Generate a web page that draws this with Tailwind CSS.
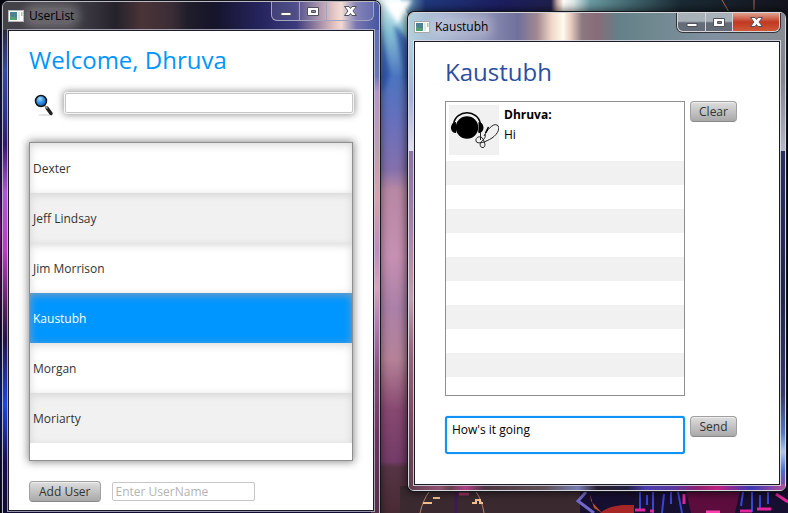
<!DOCTYPE html>
<html lang="en">
<head>
<meta charset="utf-8">
<title>UserList</title>
<script src="https://cdn.jsdelivr.net/npm/@tailwindcss/browser@4"></script>
</head>
<body class="relative h-screen overflow-hidden bg-[#07071c] font-['Open_Sans','Noto_Sans',sans-serif] text-xs text-[#333]">

<!-- Wallpaper -->
<svg class="absolute inset-0 h-full w-full" viewBox="0 0 788 513" preserveAspectRatio="none" aria-hidden="true">
  <defs>
    <linearGradient id="gap" x1="0" y1="0" x2="0" y2="1">
      <stop offset="0" stop-color="#e4fafc"/><stop offset=".06" stop-color="#8ac4d6"/><stop offset=".15" stop-color="#4c74c0"/><stop offset=".24" stop-color="#6870bc"/><stop offset=".33" stop-color="#8470ac"/><stop offset=".37" stop-color="#b888a4"/><stop offset=".5" stop-color="#c690b2"/><stop offset=".6" stop-color="#ac80a8"/><stop offset=".7" stop-color="#b58298"/><stop offset=".8" stop-color="#874870"/><stop offset=".9" stop-color="#733c68"/><stop offset=".91" stop-color="#573444"/><stop offset="1" stop-color="#482a34"/>
    </linearGradient>
    <linearGradient id="leftEdge" x1="0" y1="0" x2="0" y2="1">
      <stop offset="0" stop-color="#05050d"/><stop offset=".2" stop-color="#10134a"/><stop offset=".35" stop-color="#260d56"/><stop offset=".45" stop-color="#8a1594"/><stop offset=".55" stop-color="#4c0b50"/><stop offset=".65" stop-color="#0c0526"/><stop offset=".78" stop-color="#082290"/><stop offset=".88" stop-color="#0a0a38"/><stop offset="1" stop-color="#060616"/>
    </linearGradient>
    <linearGradient id="topStrip" x1="0" y1="0" x2="1" y2="0">
      <stop offset="0" stop-color="#d9f4f8"/><stop offset=".06" stop-color="#8ac0d0"/><stop offset=".12" stop-color="#20387c"/><stop offset=".3" stop-color="#1c1e60"/><stop offset=".425" stop-color="#20204c"/><stop offset=".44" stop-color="#c8a8a0"/><stop offset=".455" stop-color="#fffdf6"/><stop offset=".48" stop-color="#dce8e8"/><stop offset=".52" stop-color="#6b9aa2"/><stop offset=".62" stop-color="#42656e"/><stop offset=".74" stop-color="#1a2a34"/><stop offset="1" stop-color="#14141e"/>
    </linearGradient>
    <filter id="soft"><feGaussianBlur stdDeviation="2"/></filter>
    <filter id="fine"><feGaussianBlur stdDeviation=".6"/></filter>
  </defs>
  <rect width="788" height="513" fill="#07071c"/>
  <rect width="10" height="513" fill="url(#leftEdge)"/>
  <rect x="376" width="412" height="60" fill="url(#topStrip)"/>
  <path d="M376 0h24l16 30v483h-40z" fill="url(#gap)"/>
  <g filter="url(#soft)">
    <path d="M382 0h30l-14 24z" fill="#fff"/>
    <path d="M380 24l10 50-8 20zM394 24l16 18v60z" fill="#2448a4" opacity=".7"/>
  </g>
  <path d="M722 0l7 12M754 0v10" stroke="#b06850" fill="none"/>
  <rect x="400" y="486" width="180" height="27" fill="#3a2a30"/>
  <rect x="580" y="486" width="208" height="27" fill="#170f30"/>
  <g filter="url(#fine)">
    <path d="M429 492q-6 8-9 21M476 492q6 8 8 21" stroke="#b8846a" fill="none"/>
    <path d="M423 503h9M433 498h7M472 503h4v-3h4v3h3" stroke="#f0c090" stroke-width="2" fill="none"/>
    <path d="M456 491v22" stroke="#3c1a54" stroke-width="3"/><path d="M459 494h10" stroke="#a03060" stroke-width="3"/>
    <path d="M586 492l-8 9 16 12" stroke="#7068c8" stroke-width="3" fill="none"/>
    <path d="M590 494l4 14 8 5-11-12z" fill="#c05030"/>
    <path d="M600 513c10-8 20-8 34-8v8z" fill="#a82828"/>
    <path d="M686 491h54l-5 22h-44z" fill="#5c0b3c"/><path d="M706 512h14" stroke="#ff40b0" stroke-width="3"/>
    <path d="M640 492v18M647 495v10M653 492v21M664 494l-2 19M671 492v12M678 492l4 21M743 492l-2 14M752 492v20M760 495v14M768 492v12" stroke="#3a44d0" stroke-width="2"/>
    <path d="M635 510h10M650 511h4M684 494v10M740 511h12M757 509h14M776 494l12 8" stroke="#e0269c" stroke-width="3"/>
  </g>
</svg>

<main class="relative flex items-start gap-7 pl-0.5 pr-0.5">

  <!-- User list window -->
  <section aria-label="UserList" class="relative mt-px min-w-0 flex-1 overflow-hidden rounded-t-md border border-[#b9b9c4] bg-[linear-gradient(180deg,#34323a_0%,#2a2838_5%,#3548a8_13%,#2c2f90_22%,#35186c_27%,#b055e0_36%,#c23ac0_47%,#54205c_58%,#251248_64%,#1c44e8_76%,#180d50_87%,#0d0a28_100%)] px-[5px] pb-5 shadow-[0_0_0_1px_#15151c,0_0_8px_1px_rgba(0,0,0,0.5)]">
    <div class="absolute top-0 right-0 bottom-0 w-2 bg-[linear-gradient(180deg,#5a66b0_0%,#6878b8_14%,#b398c8_17%,#c49fb2_30%,#d9a4a8_37%,#bd8cc2_47%,#d9a4bb_54%,#b880b8_60%,#86507f_70%,#6c3264_82%,#4c3040_100%)]"></div>
    <div class="absolute inset-x-0 top-0 h-7 bg-[linear-gradient(90deg,#45434a_0%,#3f3d44_20%,#25222c_30%,#4a3438_37%,#3a2c35_45%,#201e2a_49%,#15142a_56%,#25235c_68%,#3c3a7c_78%,#e2c0c0_88%,#f0d8d0_90%,#7775b0_94%,#4656a0_100%)]"></div>
    <header class="relative flex h-7 items-start">
      <div class="flex h-[27px] flex-1 items-center gap-1">
        <svg class="h-3 w-4 shrink-0" viewBox="0 0 16 12" aria-hidden="true"><rect x=".5" y=".5" width="15" height="11" fill="#fff" stroke="#b6b6b6"/><path d="M2 2h7v8H2z" fill="#4c8292"/><path d="M2 6l7 2v2H2z" fill="#54a070"/><path d="M10 2h2v8h-2z" fill="#e4e4e4"/><path d="M13 2h1.500v4H13z" fill="#9cc4ac"/></svg>
        <h1 class="rounded-full bg-white/20 px-px text-xs leading-4 text-black shadow-[0_0_8px_5px_rgba(255,255,255,0.2)]">UserList</h1>
      </div>
      <div class="flex h-[19px] divide-x divide-[#a5a4be] rounded-b-md border border-t-0 border-[#a5a4be] bg-white/10">
        <button aria-label="Minimize" class="flex w-[28px] items-center justify-center"><svg class="h-4 w-4" viewBox="0 0 16 16"><path d="M3 9.500h10v3H3z" fill="#fff" stroke="#50505e"/></svg></button>
        <button aria-label="Maximize" class="flex w-[27px] items-center justify-center"><svg class="h-4 w-4" viewBox="0 0 16 16"><path d="M2.500 4.500h11v8h-11zM6.500 7.500v2h4v-2z" fill="#fff" fill-rule="evenodd" stroke="#50505e"/></svg></button>
        <button aria-label="Close" class="flex w-[46px] items-center justify-center"><svg class="h-4 w-4" viewBox="0 0 16 16"><path d="M2.500 3.500H7l1.500 2 1.500-2h4.500l-3.500 4.500 3.500 4.500H10l-1.500-2-1.500 2H2.500L6 8z" fill="#fff" stroke="#50505e"/></svg></button>
      </div>
    </header>
    <div class="relative border border-[#1c1c28] bg-white px-5 pt-[11px] pb-2 shadow-[0_0_0_1px_rgba(205,205,220,0.7)]">
      <h2 class="text-2xl leading-9 text-[#0096ff]">Welcome, Dhruva</h2>
      <div class="mt-[13px] flex items-center gap-2.5">
        <svg class="ml-1 h-6 w-[22px] shrink-0 translate-y-0.5" viewBox="0 0 22 24" aria-hidden="true">
          <defs><radialGradient id="lens" cx=".4" cy=".3" r=".7"><stop offset="0" stop-color="#a8dcfb"/><stop offset=".5" stop-color="#3293e6"/><stop offset="1" stop-color="#0a58b4"/></radialGradient></defs>
          <ellipse cx="12" cy="22" rx="7" ry="1" fill="#e4e4e4"/>
          <path d="M14 15l4 5.500" stroke="#222" stroke-width="3.500" stroke-linecap="round"/><path d="M11.500 12.500l3 3" stroke="#999" stroke-width="1.500"/>
          <circle cx="8" cy="8" r="5.500" fill="url(#lens)" stroke="#151515" stroke-width="1.500"/>
        </svg>
        <input type="text" aria-label="Search users" class="h-5 min-w-0 flex-1 rounded-xs border border-[#c6c6c6] bg-white px-1 shadow-[0_0_0_1px_#f4f4f4,0_0_7px_2px_rgba(0,0,0,0.4)] outline-none">
      </div>
      <ul class="mt-[27px] h-[319px] border border-[#8f8f8f] bg-white shadow-[0_0_8px_1px_rgba(0,0,0,0.45)]">
        <li class="flex h-[50px] items-center px-[3px] pt-0.5 shadow-[inset_0_2px_8px_rgba(0,0,0,0.16)]">Dexter</li>
        <li class="flex h-[50px] items-center bg-[#f1f1f1] px-[3px] pt-0.5 shadow-[inset_0_2px_8px_rgba(0,0,0,0.12)]">Jeff Lindsay</li>
        <li class="flex h-[50px] items-center px-[3px] pt-0.5 shadow-[inset_0_2px_8px_rgba(0,0,0,0.16)]">Jim Morrison</li>
        <li class="flex h-[50px] items-center bg-[#0096ff] px-[3px] pt-0.5 text-white shadow-[inset_0_2px_8px_rgba(140,160,180,0.9)]" aria-current="true">Kaustubh</li>
        <li class="flex h-[50px] items-center px-[3px] pt-0.5 shadow-[inset_0_2px_8px_rgba(0,0,0,0.16)]">Morgan</li>
        <li class="flex h-[50px] items-center bg-[#f1f1f1] px-[3px] pt-0.5 shadow-[inset_0_2px_8px_rgba(0,0,0,0.12)]">Moriarty</li>
      </ul>
      <form class="mt-5 flex items-center gap-[11px]">
        <button type="button" class="h-[21px] rounded border border-[#a0a0a0] border-b-[#888] bg-linear-to-b from-[#dedede] to-[#a9a9a9] px-[9px] leading-4 shadow-[inset_0_1px_0_#eee]">Add User</button>
        <input type="text" aria-label="Enter UserName" placeholder="Enter UserName" class="h-[19px] w-[143px] rounded-xs border border-[#c6c6c6] bg-white px-[3px] outline-none placeholder:text-[#b4b4b4]">
      </form>
    </div>
  </section>

  <!-- Chat window -->
  <section aria-label="Kaustubh" class="relative mt-3 min-w-0 flex-1 overflow-hidden rounded-md border border-[#d5d5dc] bg-[#5f3a48] px-[5px] pb-[5px] shadow-[0_0_0_1px_#15151c,0_0_9px_2px_rgba(0,0,0,0.6)]">
    <div class="absolute top-0 bottom-0 left-0 w-2 bg-[linear-gradient(180deg,#b8d8e4_0%,#a8c4dc_12%,#a4b0dc_18%,#e4e0f0_28.900%,#8874a4_29%,#9c7cac_40%,#b890a8_54%,#c0a0b0_60%,#9c6880_70%,#7c4860_85%,#60404c_100%)]"></div>
    <div class="absolute top-0 right-0 bottom-0 w-2 bg-[linear-gradient(180deg,#8a8c94_0%,#80868e_14%,#b4b8c8_28.900%,#283060_29%,#20284c_60%,#343c68_80%,#5878c0_88%,#b0c8ec_92%,#4c6cd0_96%,#8c3c9c_100%)]"></div>
    <div class="absolute inset-x-0 bottom-0 h-1.5 bg-[linear-gradient(90deg,#60404c_0%,#905070_8%,#64404c_11%,#b04088_15%,#4c3440_20%,#5c5054_36%,#787cb0_45%,#282030_50%,#202040_58%,#4c3cac_63%,#5838a0_70%,#902070_77%,#c02080_82%,#3c38b0_91%,#b050a0_100%)]"></div>
    <div class="absolute inset-x-0 top-0 h-7 bg-[linear-gradient(90deg,#b4d0dc_0%,#a4b4d0_8%,#8c90b4_20%,#70709c_29%,#a08890_34%,#f0d8c8_38%,#fffaf0_41%,#e8ccc0_43%,#8c7880_46%,#886c78_50%,#648088_56%,#708890_65%,#8090a0_80%,#888c94_100%)]"></div>
    <header class="relative flex h-7 items-start">
      <div class="flex h-[27px] flex-1 items-center gap-1">
        <svg class="h-3 w-4 shrink-0" viewBox="0 0 16 12" aria-hidden="true"><rect x=".5" y=".5" width="15" height="11" fill="#fff" stroke="#a6a6a6"/><path d="M2 2h7v8H2z" fill="#4c8292"/><path d="M2 6l7 2v2H2z" fill="#54a070"/><path d="M10 2h2v8h-2z" fill="#e4e4e4"/><path d="M13 2h1.500v4H13z" fill="#9cc4ac"/></svg>
        <h1 class="rounded-full bg-white/20 px-px text-xs leading-4 text-black shadow-[0_0_8px_5px_rgba(255,255,255,0.2)]">Kaustubh</h1>
      </div>
      <div class="flex h-[19px] divide-x divide-[#d4d4d8] overflow-hidden rounded-b-md border border-t-0 border-[#d4d4d8] bg-linear-to-b from-[#a8b0b8] from-45% to-[#646c78] to-55% shadow-[0_0_0_1px_#33333c]">
        <button aria-label="Minimize" class="flex w-[28px] items-center justify-center"><svg class="h-4 w-4" viewBox="0 0 16 16"><path d="M3 9.500h10v3H3z" fill="#fff" stroke="#50505e"/></svg></button>
        <button aria-label="Maximize" class="flex w-[27px] items-center justify-center"><svg class="h-4 w-4" viewBox="0 0 16 16"><path d="M2.500 4.500h11v8h-11zM6.500 7.500v2h4v-2z" fill="#fff" fill-rule="evenodd" stroke="#50505e"/></svg></button>
        <button aria-label="Close" class="flex w-[46px] items-center justify-center bg-linear-to-b from-[#e0a090] via-[#c03820] to-[#d05838]"><svg class="h-4 w-4" viewBox="0 0 16 16"><path d="M2.500 3.500H7l1.500 2 1.500-2h4.500l-3.500 4.500 3.500 4.500H10l-1.500-2-1.500 2H2.500L6 8z" fill="#fff" stroke="#50505e"/></svg></button>
      </div>
    </header>
    <div class="relative border border-[#1c1c28] bg-white pt-3 pr-[42px] pb-[30px] pl-[30px] shadow-[0_0_0_1px_rgba(225,225,235,0.8)]">
      <h2 class="text-2xl leading-9 text-[#2b4ea2]">Kaustubh</h2>
      <div class="mt-[11px] flex items-start gap-[5px]">
        <div class="h-[295px] flex-1 border border-[#8f8f8f] bg-[repeating-linear-gradient(180deg,#f1f1f1_0,#f1f1f1_24px,#fff_24px,#fff_48px)] bg-[position:0_59px] bg-no-repeat">
          <article class="flex h-[59px] gap-[5px] bg-white p-[3px]">
            <svg class="h-[50px] w-[50px] shrink-0 bg-[#f1f1f1]" viewBox="0 0 50 50" role="img" aria-label="Dhruva">
              <circle cx="18" cy="22.500" r="11.200"/><path d="M4.500 19C7 4 29 4 31.500 19" fill="none" stroke="#000" stroke-width="1.500"/>
              <path d="M7 17c-6 0-7 10-1 11 2 0 1-2 1-5zM29.500 17c6 0 7 10 1 11-2 0-1-2-1-5z"/>
              <path d="M31.500 27v8M35 31c3-6 9-13 13-11s1 9-5 13-15 7-16 3 5-6 7-2 3 8 0 8.500-4-4-1-6.500 4-5 3-7" fill="none" stroke="#222"/><path d="M36.500 28l3-6" stroke="#000" stroke-width="1.600"/>
            </svg>
            <div class="text-black"><h3 class="text-xs leading-5 font-bold">Dhruva:</h3><p class="leading-5">Hi</p></div>
          </article>
        </div>
        <button type="button" class="h-[21px] w-[47px] rounded border border-[#a0a0a0] border-b-[#888] bg-linear-to-b from-[#dedede] to-[#a9a9a9] leading-4 shadow-[inset_0_1px_0_#eee]">Clear</button>
      </div>
      <form class="mt-5 flex items-start gap-[5px]">
        <textarea aria-label="Message" class="h-[38px] min-w-0 flex-1 resize-none rounded-[3px] border-2 border-[#0f93f5] bg-white px-[5px] py-1 leading-4 text-black shadow-[0_0_1px_#0f93f5] outline-none">How's it going</textarea>
        <button type="button" class="h-[21px] w-[47px] rounded border border-[#a0a0a0] border-b-[#888] bg-linear-to-b from-[#dedede] to-[#a9a9a9] leading-4 shadow-[inset_0_1px_0_#eee]">Send</button>
      </form>
    </div>
  </section>
</main>
</body>
</html>
